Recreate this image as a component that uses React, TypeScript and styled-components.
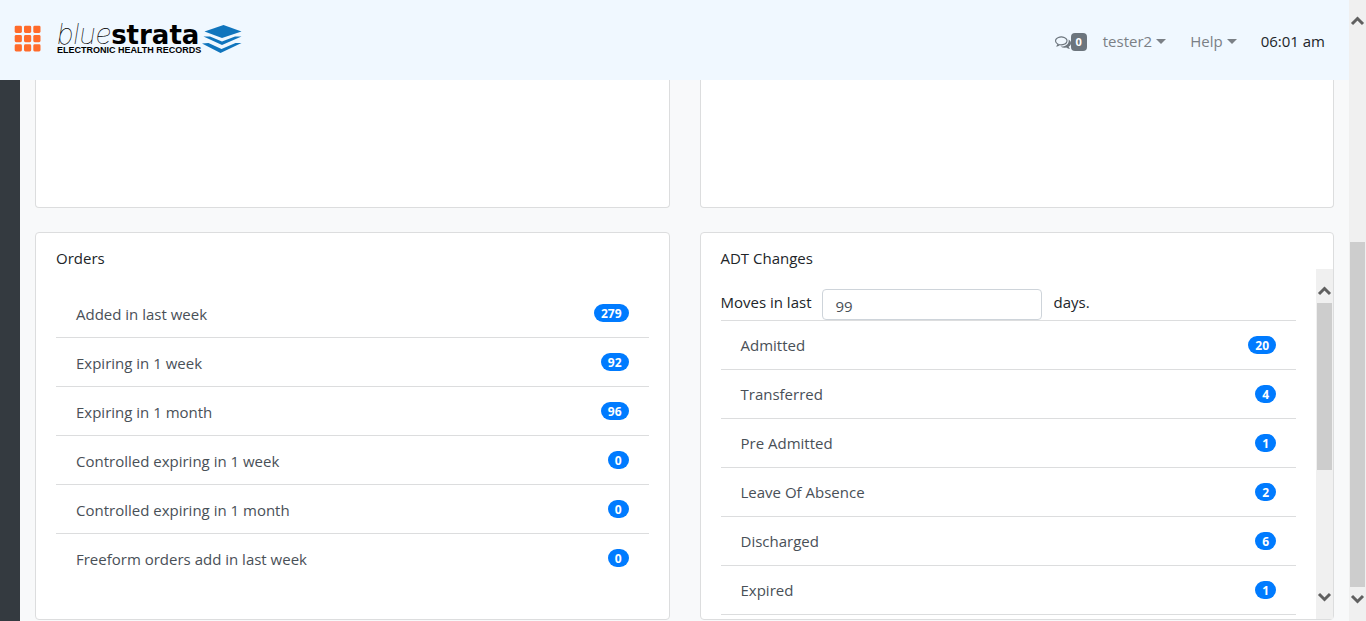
import React from "react";
import styled, { createGlobalStyle } from "styled-components";

const GlobalStyle = createGlobalStyle`
  *, *::before, *::after { box-sizing: border-box; }
  body {
    margin: 0;
    background: #f8f9fa;
    color: #212529;
    font-family: "Open Sans", "Noto Sans", sans-serif;
    font-size: 15px;
    line-height: 24px;
  }
`;

const Shell = styled.div`
  display: flex;
  min-height: 100vh;
`;

const Page = styled.div`
  flex: 1;
  min-width: 0;
  display: flex;
  flex-direction: column;
`;

const Header = styled.header`
  display: flex;
  align-items: flex-start;
  justify-content: space-between;
  height: 80px;
  padding: 24px 24px 0 14px;
  background: #f0f8ff;
`;

const Brand = styled.div`
  display: flex;
  align-items: flex-start;
`;

const AppsButton = styled.button`
  display: flex;
  margin: 1px 15px 0 0;
  padding: 0;
  border: 0;
  background: none;
  cursor: pointer;
`;

const LogoLink = styled.a`
  display: flex;
  gap: 1px;
  color: #000;
  text-decoration: none;
`;

const LogoText = styled.span`
  display: flex;
  flex-direction: column;
  white-space: nowrap;
`;

const LogoName = styled.span`
  display: flex;
  align-items: baseline;
  height: 20px;
  font-family: Inter, sans-serif;
  font-size: 28px;
  font-style: italic;
  font-weight: 100;
  line-height: 20px;

  strong {
    font-family: "DejaVu Sans", sans-serif;
    font-size: 26px;
    font-style: normal;
    font-weight: 700;
  }
`;

const LogoTagline = styled.span`
  font-family: "Liberation Sans", sans-serif;
  font-size: 9px;
  font-weight: 700;
  line-height: 12px;
`;

const Nav = styled.nav`
  display: flex;
  align-items: center;
  height: 34px;
`;

const Messages = styled.a`
  display: flex;
  align-items: center;
  margin-right: 16px;
  padding-top: 2px;
  color: #6c757d;
  text-decoration: none;
`;

const MessageCount = styled.span`
  width: 16px;
  height: 18px;
  border-radius: 4px;
  background: #6c757d;
  color: #fff;
  font-size: 11px;
  font-weight: 700;
  line-height: 18px;
  text-align: center;
`;

const MenuButton = styled.button`
  display: flex;
  align-items: center;
  gap: 4px;
  margin: 0 24px 0 0;
  padding: 0;
  border: 0;
  background: none;
  color: #7b8086;
  font: inherit;
  cursor: pointer;

  &::after {
    content: "";
    border: 5px solid transparent;
    border-top-color: currentColor;
    border-bottom: 0;
  }
`;

const Body = styled.div`
  flex: 1;
  display: flex;
`;

const Sidebar = styled.aside`
  width: 20px;
  background: #343a40;
`;

const Main = styled.main`
  flex: 1;
  display: grid;
  grid-template-columns: repeat(2, minmax(0, 1fr));
  grid-template-rows: auto auto;
  align-content: start;
  gap: 24px 30px;
  padding: 0 15px 1px;
`;

const CardTail = styled.section`
  height: 128px;
  border: 1px solid #dcddde;
  border-top: 0;
  border-radius: 0 0 4px 4px;
  background: #fff;
`;

const Card = styled.section`
  display: flex;
  flex-direction: column;
  height: 388px;
  border: 1px solid #dcddde;
  border-radius: 4px;
  background: #fff;
`;

const CardTitle = styled.h2`
  margin: 0;
  padding: 13px 20px 0;
  height: 36px;
  font-size: 15px;
  font-weight: 400;
  line-height: 24px;
`;

const CardBody = styled.div`
  flex: 1;
  min-height: 0;
  padding: 20px 20px 0;
`;

const ScrollRow = styled.div`
  flex: 1;
  min-height: 0;
  display: flex;
`;

const ScrollContent = styled.div`
  flex: 1;
  min-width: 0;
  padding: 20px 20px 0;
  overflow: hidden;
`;

const Filter = styled.div`
  display: flex;
  align-items: center;
  height: 31px;
  gap: 11px;

  label, span { margin-bottom: 6px; }
`;

const DaysInput = styled.input`
  width: 220px;
  height: 31px;
  padding: 2px 12px 0;
  border: 1px solid #ced4da;
  border-radius: 4px;
  background: #fff;
  color: #495057;
  font: inherit;
`;

const ItemLink = styled.a`
  color: #495057;
  text-decoration: none;
`;

const List = styled.ul<{ $ruled?: boolean }>`
  margin: 0;
  padding: 0;
  list-style: none;
  border-top: ${(p) => (p.$ruled ? "1px solid #dcddde" : "0")};

  ${ItemLink} {
    padding-top: ${(p) => (p.$ruled ? 0 : 2)}px;
  }
`;

const Item = styled.li<{ $last?: boolean }>`
  display: flex;
  align-items: center;
  justify-content: space-between;
  height: 49px;
  padding: 0 20px;
  border-bottom: 1px solid ${(p) => (p.$last ? "transparent" : "#dcddde")};
`;

const Pill = styled.span`
  height: 18px;
  padding: 0 7px;
  border-radius: 9px;
  background: #007bff;
  color: #fff;
  font-size: 12px;
  font-weight: 700;
  line-height: 19px;
`;

const Bar = styled.div<{ $lead: number; $tail: number }>`
  display: flex;
  flex-direction: column;
  width: 17px;
  flex: none;
  padding: ${(p) => p.$lead}px 1px ${(p) => p.$tail}px;
  background: #f0f0f0;
`;

const BarArrow = styled.svg`
  display: block;
  flex: none;
  width: 15px;
  height: 17px;
  fill: none;
  stroke: #606060;
  stroke-width: 3;
`;

const BarSpace = styled.div<{ $grow: number }>`
  flex: ${(p) => p.$grow} 0 0;
`;

const BarThumb = styled(BarSpace)`
  background: #cdcdcd;
`;

type ScrollbarProps = {
  lead: number;
  tail: number;
  before: number;
  thumb: number;
  after: number;
};

function Scrollbar({ lead, tail, before, thumb, after }: ScrollbarProps) {
  return (
    <Bar $lead={lead} $tail={tail} aria-hidden="true">
      <BarArrow viewBox="0 0 15 17">
        <path d="M2 12 7.500 6.500 13 12" />
      </BarArrow>
      <BarSpace $grow={before} />
      <BarThumb $grow={thumb} />
      <BarSpace $grow={after} />
      <BarArrow viewBox="0 0 15 17">
        <path d="M2 5 7.500 10.500 13 5" />
      </BarArrow>
    </Bar>
  );
}

const orders: [string, number][] = [
  ["Added in last week", 279],
  ["Expiring in 1 week", 92],
  ["Expiring in 1 month", 96],
  ["Controlled expiring in 1 week", 0],
  ["Controlled expiring in 1 month", 0],
  ["Freeform orders add in last week", 0],
];

const moves: [string, number][] = [
  ["Admitted", 20],
  ["Transferred", 4],
  ["Pre Admitted", 1],
  ["Leave Of Absence", 2],
  ["Discharged", 6],
  ["Expired", 1],
];

const dots = [0.7, 10, 19.3];

export default function App() {
  return (
    <>
      <GlobalStyle />
      <Shell>
        <Page>
          <Header>
            <Brand>
              <AppsButton aria-label="Applications">
                <svg width="28" height="27" viewBox="0 0 28 27" fill="#ff6b2b">
                  {dots.map((y) =>
                    dots.map((x) => (
                      <rect key={`${x}-${y}`} x={x} y={y} width="7.2" height="7.2" rx="1.4" />
                    ))
                  )}
                </svg>
              </AppsButton>
              <LogoLink href="#">
                <LogoText>
                  <LogoName>
                    blue<strong>strata</strong>
                  </LogoName>
                  <LogoTagline>ELECTRONIC HEALTH RECORDS</LogoTagline>
                </LogoText>
                <svg width="40" height="30" viewBox="0 0 40 30" fill="#1075bd">
                  <path d="M21.500 1 39.500 7.500 20 14 2.500 7.500Z" />
                  <path d="M1.500 12.500 8 12.500 20 17.500 33 12.500 39.500 12.500 20 21Z" />
                  <path d="M0 19.500 6.500 19 19.500 25 33.500 19 39.500 19 18.500 29Z" />
                </svg>
              </LogoLink>
            </Brand>
            <Nav>
              <Messages href="#" aria-label="Messages">
                <svg width="16" height="16" viewBox="0 0 1792 1792" fill="currentColor">
                  <path d="M704 384q-153 0-286 52t-211.500 141-78.500 191q0 82 53 158t149 132l97 56-35 84q34-20 62-39l44-31 53 10q78 14 153 14 153 0 286-52t211.500-141 78.500-191-78.500-191-211.500-141-286-52zm0-128q191 0 353.500 68.500t256.500 186.500 94 257-94 257-256.500 186.500-353.500 68.500q-86 0-176-16-124 88-278 128-36 9-86 16h-3q-11 0-20.500-8t-11.500-21q-1-3-1-6.500t.5-6.500 2-6l2.500-5 3.500-5.500 4-5 4.500-5 4-4.500q5-6 23-25t26-29.500 22.500-29 25-38.500 20.500-44q-124-72-195-177t-71-224q0-139 94-257t256.500-186.500 353.500-68.500zm822 1169q10 24 20.500 44t25 38.500 22.500 29 26 29.500 23 25q1 1 4 4.500t4.500 5 4 5 3.500 5.500l2.500 5 2 6 .5 6.500-1 6.500q-3 14-13 22t-22 7q-50-7-86-16-154-40-278-128-90 16-176 16-271 0-472-132 58 4 88 4 161 0 309-45t264-129q125-92 192-212t67-254q0-77-23-152 129 71 204 178t75 230q0 120-71 224.500t-195 176.500z" />
                </svg>
                <MessageCount>0</MessageCount>
              </Messages>
              <MenuButton>tester2</MenuButton>
              <MenuButton>Help</MenuButton>
              <time>06:01 am</time>
            </Nav>
          </Header>
          <Body>
            <Sidebar />
            <Main>
              <CardTail />
              <CardTail />
              <Card>
                <CardTitle>Orders</CardTitle>
                <CardBody>
                  <List>
                    {orders.map(([name, count], i) => (
                      <Item key={name} $last={i === orders.length - 1}>
                        <ItemLink href="#">{name}</ItemLink>
                        <Pill>{count}</Pill>
                      </Item>
                    ))}
                  </List>
                </CardBody>
              </Card>
              <Card>
                <CardTitle>ADT Changes</CardTitle>
                <ScrollRow>
                  <ScrollContent>
                    <Filter>
                      <label htmlFor="days">Moves in last</label>
                      <DaysInput id="days" defaultValue="99" />
                      <span>days.</span>
                    </Filter>
                    <List $ruled>
                      {moves.map(([name, count]) => (
                        <Item key={name}>
                          <ItemLink href="#">{name}</ItemLink>
                          <Pill>{count}</Pill>
                        </Item>
                      ))}
                    </List>
                  </ScrollContent>
                  <Scrollbar lead={13} tail={13} before={4} thumb={167} after={119} />
                </ScrollRow>
              </Card>
            </Main>
          </Body>
        </Page>
        <Scrollbar lead={12} tail={13} before={213} thumb={345} after={4} />
      </Shell>
    </>
  );
}
